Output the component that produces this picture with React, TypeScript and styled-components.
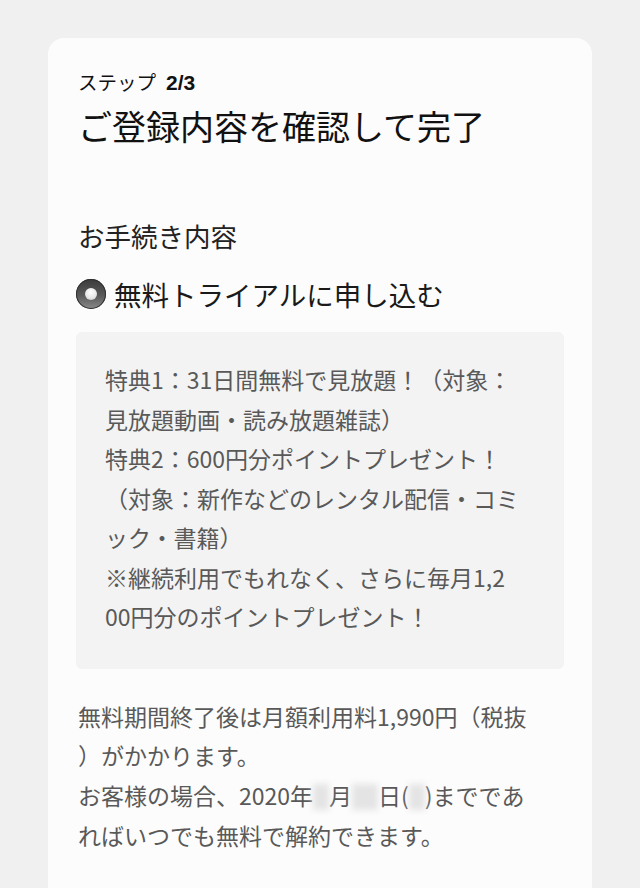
import React from "react";
import styled, { createGlobalStyle } from "styled-components";

const GlobalStyle = createGlobalStyle`
  html, body {
    margin: 0;
    padding: 0;
    background: #f0f0f0;
  }

  body {
    font-family: "Noto Sans CJK JP", "Liberation Sans", sans-serif;
    -webkit-font-smoothing: antialiased;
  }
`;

const Page = styled.div`
  min-height: 888px;
  padding: 38px 48px 0;
  box-sizing: border-box;
`;

const Card = styled.section`
  background: #fcfcfc;
  border-radius: 16px 16px 0 0;
  padding: 31px 28px 60px 30px;
  min-height: 850px;
  box-sizing: border-box;
`;

const StepLabel = styled.div`
  font-size: 19.5px;
  line-height: 25px;
  color: #111;
  display: flex;
  align-items: baseline;
  gap: 10px;
`;

const StepCount = styled.span`
  font-family: "Liberation Sans", sans-serif;
  font-weight: 700;
  font-size: 21px;
`;

const Title = styled.h1`
  margin: 8px 0 0;
  font-size: 34px;
  line-height: 46px;
  font-weight: 400;
  color: #111;
`;

const SectionHeading = styled.h2`
  margin: 69px 0 0;
  font-size: 26.5px;
  line-height: 36px;
  font-weight: 400;
  color: #222;
`;

const RadioRow = styled.label`
  margin-top: 22px;
  display: flex;
  align-items: center;
  gap: 8px;
  margin-left: -2px;
  font-size: 27.5px;
  line-height: 36px;
  color: #1a1a1a;
`;

const RadioMark = styled.span`
  width: 30px;
  height: 30px;
  border-radius: 50%;
  flex-shrink: 0;
  display: flex;
  align-items: center;
  justify-content: center;
  background: linear-gradient(180deg, #3a3a3a 0%, #5a5a5a 55%, #8a8a8a 100%);
  box-shadow: inset 0 0 0 1px #2e2e2e;

  &::after {
    content: "";
    width: 12px;
    height: 12px;
    border-radius: 50%;
    background: radial-gradient(circle at 50% 35%, #ffffff 0%, #e6e6e6 60%, #bdbdbd 100%);
  }
`;

const BenefitBox = styled.div`
  margin-top: 20px;
  width: 488px;
  margin-left: -2px;
  box-sizing: border-box;
  background: #f3f3f3;
  border-radius: 6px;
  padding: 28px 20px 32px 29px;
  font-size: 23px;
  line-height: 39.5px;
  color: #595959;
  white-space: nowrap;
`;

const Notice = styled.p`
  margin: 28px 0 0;
  font-size: 23px;
  line-height: 39.7px;
  color: #595959;
  white-space: nowrap;
`;

const Masked = styled.span<{ $w: number }>`
  display: inline-block;
  width: ${(p) => p.$w}px;
  height: 26px;
  vertical-align: -5px;
  background: #e4e4e4;
  filter: blur(3px);
`;

export default function App() {
  return (
    <>
      <GlobalStyle />
      <Page>
        <Card>
          <StepLabel>
            <span>ステップ</span>
            <StepCount>2/3</StepCount>
          </StepLabel>
          <Title>ご登録内容を確認して完了</Title>

          <SectionHeading>お手続き内容</SectionHeading>
          <RadioRow>
            <RadioMark />
            無料トライアルに申し込む
          </RadioRow>

          <BenefitBox>
            特典1：31日間無料で見放題！（対象：
            <br />
            見放題動画・読み放題雑誌）
            <br />
            特典2：600円分ポイントプレゼント！
            <br />
            （対象：新作などのレンタル配信・コミ
            <br />
            ック・書籍）
            <br />
            ※継続利用でもれなく、さらに毎月1,2
            <br />
            00円分のポイントプレゼント！
          </BenefitBox>

          <Notice>
            無料期間終了後は月額利用料1,990円（税抜
            <br />
            ）がかかります。
            <br />
            お客様の場合、2020年<Masked $w={16} />月<Masked $w={26} />日(
            <Masked $w={16} />)までであ
            <br />
            ればいつでも無料で解約できます。
          </Notice>
        </Card>
      </Page>
    </>
  );
}
